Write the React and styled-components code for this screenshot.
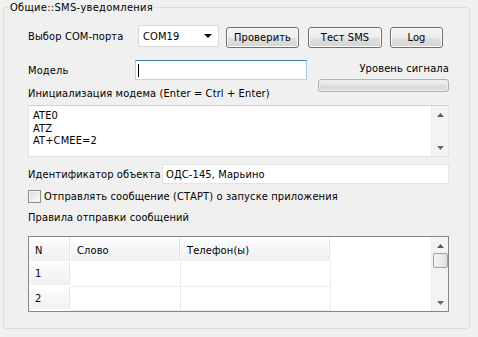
import React from 'react';
import styled, { createGlobalStyle } from 'styled-components';

const Global = createGlobalStyle`
  html, body {
    margin: 0;
    padding: 0;
    background: #f0f0f0;
  }
  body {
    font-family: "DejaVu Sans Condensed", "Liberation Sans", sans-serif;
    font-size: 11px;
    letter-spacing: 0.12px;
    color: #000;
  }
`;

const Page = styled.div`
  width: 478px;
  height: 337px;
  box-sizing: border-box;
  padding: 7px 8px 0 3px;
  background: #f0f0f0;
`;

const Group = styled.div`
  position: relative;
  height: 322px;
  box-sizing: border-box;
  border: 1px solid #d5dfe5;
  border-radius: 3px;
  padding: 17px 20px 0 24px;
  display: flex;
  flex-direction: column;
`;

const GroupTitle = styled.span`
  position: absolute;
  top: -7px;
  left: 5px;
  padding: 0 1px;
  line-height: 13px;
  letter-spacing: 0.3px;
  background: #f0f0f0;
`;

const Row = styled.div`
  display: flex;
  align-items: ${({ align }) => align || 'center'};
  margin-top: ${({ mt }) => mt || 0}px;
`;

const Label = styled.span`
  display: block;
  flex: none;
  width: ${({ width }) => (width ? `${width}px` : 'auto')};
  line-height: 13px;
  text-align: ${({ align }) => align || 'left'};
  margin-top: ${({ mt }) => mt || 0}px;
  white-space: nowrap;
`;

const Combo = styled.div`
  width: 81px;
  height: 22px;
  box-sizing: border-box;
  border: 1px solid #d9d9d9;
  border-radius: 2px;
  background: #fff;
  display: flex;
  align-items: center;
  justify-content: space-between;
  padding: 0 6px 0 4px;
`;

const Button = styled.button`
  width: ${({ width }) => width}px;
  height: 21px;
  margin: 2px 0 0 ${({ ml }) => ml}px;
  padding: 0;
  box-sizing: border-box;
  border: 1px solid #707070;
  border-radius: 3px;
  font: inherit;
  letter-spacing: inherit;
  color: #000;
  background: linear-gradient(#f4f4f4 0%, #ececec 50%, #e0e0e0 51%, #d4d4d4 100%);
  box-shadow: inset 0 0 0 1px #fcfcfc;
`;

const Input = styled.div`
  width: ${({ width }) => (width ? `${width}px` : 'auto')};
  flex: ${({ width }) => (width ? 'none' : '1')};
  height: ${({ height }) => height || 21}px;
  box-sizing: border-box;
  border: 1px solid;
  border-color: ${({ focused }) => (focused ? '#3d7bad #a4c9e3 #b7d9ed #b5cfe7' : '#e3e3e3')};
  background: #fff;
  display: flex;
  align-items: center;
  padding: 0 3px;
`;

const Caret = styled.span`
  width: 1px;
  height: 13px;
  background: #000;
  margin-left: -1px;
`;

const LeftCol = styled.div`
  flex: 1;
  display: flex;
  flex-direction: column;
`;

const SignalCol = styled.div`
  width: 131px;
  margin-top: 2px;
  display: flex;
  flex-direction: column;
  align-items: flex-end;
`;

const Progress = styled.div`
  width: 131px;
  height: 13px;
  margin-top: 4px;
  box-sizing: border-box;
  border: 1px solid #b2b2b2;
  border-radius: 3px;
  background: linear-gradient(#f3f3f3 0%, #e4e4e4 45%, #d9d9d9 55%, #dedede 100%);
  box-shadow: inset 0 0 0 1px #ececec;
`;

const TextArea = styled.div`
  height: 52px;
  margin-top: 5px;
  box-sizing: border-box;
  border: 1px solid #e3e3e3;
  border-top-color: #d0d0d0;
  background: #fff;
  display: flex;
`;

const AreaText = styled.div`
  flex: 1;
  padding: 4px 0 0 4px;
  line-height: 12.7px;
`;

const ScrollBar = styled.div`
  width: 17px;
  flex: none;
  background: #f3f3f3;
  border-left: 1px solid #ececec;
  display: flex;
  flex-direction: column;
  align-items: center;
  justify-content: space-between;
  padding: 7px 0 6px;
  box-sizing: border-box;
`;

const Thumb = styled.div`
  width: 15px;
  height: 15px;
  box-sizing: border-box;
  border: 1px solid #a0a0a0;
  border-radius: 2px;
  background: linear-gradient(90deg, #f4f4f4 0%, #ececec 50%, #dedede 100%);
  margin-top: 5px;
`;

const Check = styled.span`
  width: 13px;
  height: 13px;
  box-sizing: border-box;
  border: 1px solid #8f8f8f;
  background: linear-gradient(135deg, #dcdcdc, #fbfbfb);
  box-shadow: inset 0 0 0 1px #f4f4f4;
  margin-right: 3px;
  flex: none;
`;

const Table = styled.div`
  height: 76px;
  margin-top: 12px;
  box-sizing: border-box;
  border: 1px solid #828790;
  background: #fff;
  display: flex;
  overflow: hidden;
`;

const Grid = styled.div`
  display: grid;
  grid-template-columns: 42px 110px 150px;
  grid-template-rows: 25px 25px 24px;
  align-self: flex-start;
`;

const HeadCell = styled.div`
  box-sizing: border-box;
  display: flex;
  align-items: center;
  padding: 2px 0 0 6px;
  border-right: 1px solid #fff;
  border-bottom: 1px solid #fff;
  box-shadow: inset -1px 0 0 #e5e5e5;
  background: linear-gradient(#ffffff 0%, #f6f7f8 40%, #f1f2f4 100%);
`;

const RowHead = styled(HeadCell)`
  padding: 0 0 0 6px;
  border-bottom: 2px solid #fff;
  box-shadow: inset -1px 0 0 #e5e5e5, 0 1px 0 #e0e0e0;
`;

const Cell = styled.div`
  box-sizing: border-box;
  border-right: 1px solid #ebebeb;
  border-bottom: 1px solid #ebebeb;
  background: #fff;
`;

const Spacer = styled.div`
  flex: 1;
`;

const Arrow = ({ up }) => (
  <svg width="7" height="4" viewBox="0 0 7 4">
    <path d={up ? 'M3.5 0 L7 4 L0 4 Z' : 'M0 0 L7 0 L3.5 4 Z'} fill={up ? '#5a5a5a' : '#6a6a6a'} />
  </svg>
);

const ComboArrow = () => (
  <svg width="8" height="4" viewBox="0 0 8 4">
    <path d="M0 0 L8 0 L4 4 Z" fill="#000" />
  </svg>
);

const rows = ['1', '2'];

export default function App() {
  return (
    <Page>
      <Global />
      <Group>
        <GroupTitle>Общие::SMS-уведомления</GroupTitle>

        <Row align="flex-start">
          <Label width={110} mt={5}>Выбор COM-порта</Label>
          <Combo>
            <span>COM19</span>
            <ComboArrow />
          </Combo>
          <Button width={73} ml={7}>Проверить</Button>
          <Button width={74} ml={9}>Тест SMS</Button>
          <Button width={53} ml={8}>Log</Button>
        </Row>

        <Row align="flex-start" mt={12}>
          <LeftCol>
            <Row>
              <Label width={107} mt={1}>Модель</Label>
              <Input width={172} height={20} focused>
                <Caret />
              </Input>
            </Row>
            <Label mt={7}>Инициализация модема (Enter = Ctrl + Enter)</Label>
          </LeftCol>
          <SignalCol>
            <Label align="right">Уровень сигнала</Label>
            <Progress />
          </SignalCol>
        </Row>

        <TextArea>
          <AreaText>
            ATE0<br />ATZ<br />AT+CMEE=2
          </AreaText>
          <ScrollBar>
            <Arrow up />
            <Arrow />
          </ScrollBar>
        </TextArea>

        <Row mt={7}>
          <Label width={134}>Идентификатор объекта</Label>
          <Input height={20}>ОДС-145, Марьино</Input>
        </Row>

        <Row mt={6}>
          <Check />
          <Label>Отправлять сообщение (СТАРТ) о запуске приложения</Label>
        </Row>

        <Label mt={8}>Правила отправки сообщений</Label>

        <Table>
          <Grid>
            <HeadCell>N</HeadCell>
            <HeadCell>Слово</HeadCell>
            <HeadCell>Телефон(ы)</HeadCell>
            {rows.map((n) => (
              <React.Fragment key={n}>
                <RowHead>{n}</RowHead>
                <Cell />
                <Cell />
              </React.Fragment>
            ))}
          </Grid>
          <Spacer />
          <ScrollBar>
            <Arrow up />
            <Thumb />
            <Spacer />
            <Arrow />
          </ScrollBar>
        </Table>
      </Group>
    </Page>
  );
}
